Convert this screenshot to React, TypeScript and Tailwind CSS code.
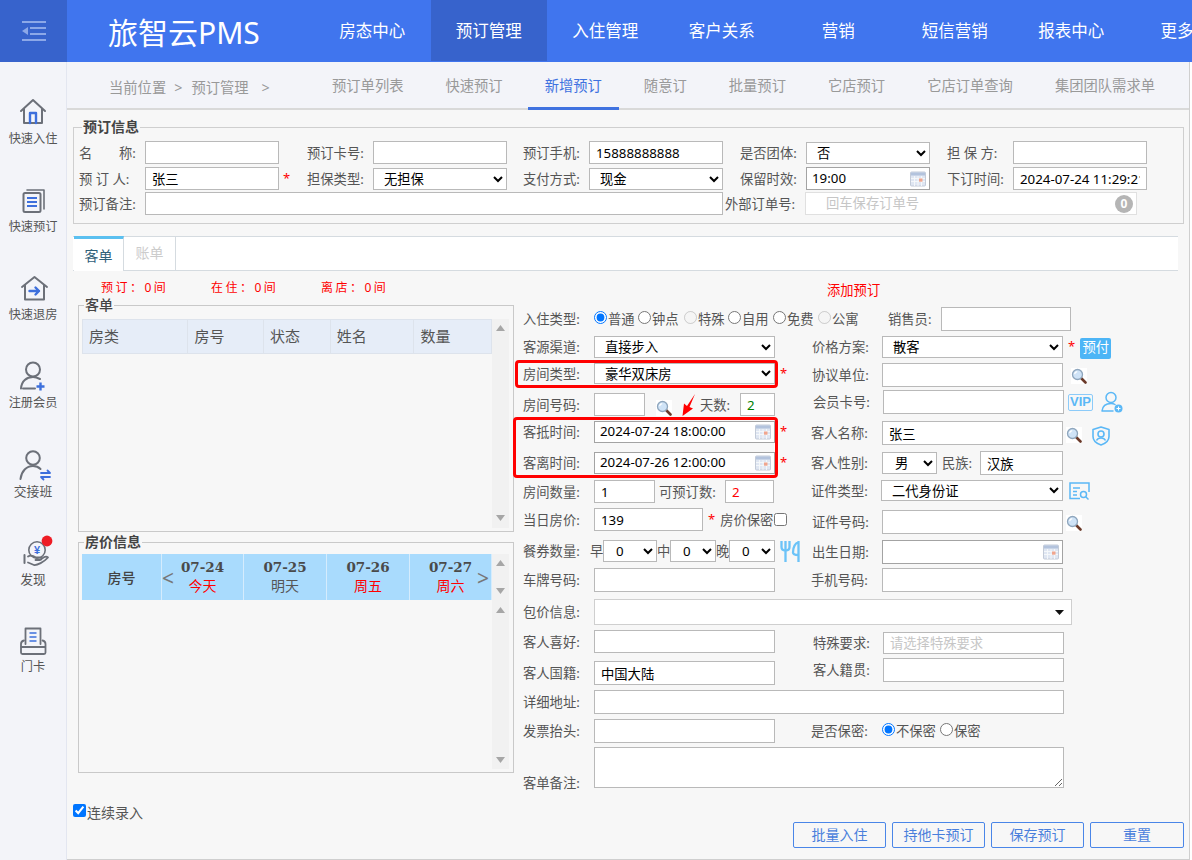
import React from "react";

const navItems = ["房态中心", "预订管理", "入住管理", "客户关系", "营销", "短信营销", "报表中心"];
const subTabs = ["预订单列表", "快速预订", "新增预订", "随意订", "批量预订", "它店预订", "它店订单查询", "集团团队需求单"];

function SearchIcon({ className = "" }: { className?: string }) {
  return (
    <svg className={`h-[16px] w-[16px] shrink-0 ${className}`} viewBox="0 0 16 16">
      <rect width="16" height="16" fill="#fff" />
      <path d="M10 10L14.500 14.500" stroke="#6b3a2a" strokeWidth="2.600" strokeLinecap="round" />
      <circle cx="6.500" cy="6.500" r="5" fill="#cfe3f7" stroke="#8fa6bd" strokeWidth="1.300" />
      <path d="M3.600 6.200a3 3 0 0 1 2.600-2.600" stroke="#fff" strokeWidth="1.200" fill="none" />
    </svg>
  );
}

function CalendarIcon() {
  return (
    <svg className="h-[16px] w-[16px] shrink-0" viewBox="0 0 16 16">
      <rect x="0.500" y="1" width="15" height="14" rx="1" fill="#dfe6f2" stroke="#c3cbd8" />
      <rect x="1" y="1.500" width="14" height="3" fill="#b3c3dd" />
      <path d="M1 7.500H15M1 10.500H15M4.500 5V15M8 5V15M11.500 5V15" stroke="#f6f8fb" strokeWidth="0.900" />
      <rect x="9" y="7.500" width="3.500" height="3.200" fill="#f0a58e" />
    </svg>
  );
}

function Caret() {
  return (
    <svg className="h-[6px] w-[9px]" viewBox="0 0 9 6">
      <path d="M0 0H9L4.500 6Z" fill="#a6a6a6" />
    </svg>
  );
}

function Scrollbar({ className = "" }: { className?: string }) {
  return (
    <div className={`flex w-[17px] flex-col items-center justify-between bg-[#f1f1f1] ${className}`}>
      <span className="rotate-180">
        <Caret />
      </span>
      <Caret />
    </div>
  );
}

function Label({ text, className = "w-[71px]" }: { text: string; className?: string }) {
  return <span className={`shrink-0 whitespace-nowrap text-[13.3px] leading-[18px] text-[#555] ${className}`}>{text}</span>;
}

function Field({ value = "", className = "", placeholder }: { value?: string; className?: string; placeholder?: string }) {
  return (
    <input
      readOnly
      value={value}
      placeholder={placeholder}
      className={`shrink-0 border border-[#b9b9b9] bg-white px-[6px] text-[13.3px] text-black outline-none placeholder:text-[#c6c6c6] ${className}`}
    />
  );
}

function DateField({ value = "", className = "" }: { value?: string; className?: string }) {
  return (
    <div className={`flex shrink-0 items-center justify-between border border-[#a3a3a3] bg-white pl-[5px] pr-[3px] text-[13.3px] text-black ${className}`}>
      <span className="whitespace-nowrap">{value}</span>
      <CalendarIcon />
    </div>
  );
}

function Select({ value, className = "" }: { value: string; className?: string }) {
  return (
    <select className={`shrink-0 border border-[#b9b9b9] bg-white pl-[6px] text-[13.3px] text-black outline-none ${className}`} defaultValue={value}>
      <option>{value}</option>
    </select>
  );
}

function Star({ className = "" }: { className?: string }) {
  return <span className={`shrink-0 -translate-y-px text-[13px] leading-[18px] text-[#f00] ${className}`}>*</span>;
}

function RadioItem({ text, checked, disabled, className }: { text: string; checked?: boolean; disabled?: boolean; className: string }) {
  return (
    <label className={`flex shrink-0 items-center text-[13.3px] leading-[18px] text-[#555] ${className}`}>
      <input type="radio" readOnly checked={!!checked} disabled={disabled} className="m-0 mb-[4px] mr-[1px] h-[13px] w-[13px]" />
      <span className="whitespace-nowrap">{text}</span>
    </label>
  );
}

const grey = "#6c7079";
const blue = "#3d6fdc";

function SideItem({ label, labelClass = "text-[12.2px]", children }: { label: string; labelClass?: string; children: React.ReactNode }) {
  return (
    <div className="flex h-[88px] flex-col items-center">
      <svg className="h-[34px] w-[40px] overflow-visible" viewBox="0 0 40 34" fill="none" strokeLinecap="round" strokeLinejoin="round">
        {children}
      </svg>
      <span className={`whitespace-nowrap leading-[18px] text-[#555] ${labelClass}`}>{label}</span>
    </div>
  );
}

function Sidebar() {
  return (
    <aside className="w-[67px] shrink-0 border-r border-[#e3e6f0] bg-[#f3f4f9] pt-[34px]">
      <SideItem label="快速入住">
        <path d="M8 15L20 4L32 15" stroke={grey} strokeWidth="2" />
        <path d="M11 13V27H29V13" stroke={grey} strokeWidth="2" />
        <path d="M17 27V17H23V27" stroke={blue} strokeWidth="2.400" />
      </SideItem>
      <SideItem label="快速预订">
        <path d="M14 6H31V25" stroke={grey} strokeWidth="1.600" />
        <rect x="10.500" y="9" width="17" height="19" rx="1.500" stroke={grey} strokeWidth="2" />
        <path d="M14 14H24M14 18H24M14 22H24" stroke={blue} strokeWidth="2" strokeLinecap="butt" />
      </SideItem>
      <SideItem label="快速退房">
        <path d="M9 15L21.500 5L34 15" stroke={grey} strokeWidth="2" />
        <path d="M12 13V27.500H31V13" stroke={grey} strokeWidth="2" />
        <path d="M16.500 19H26M22.500 15.500L26 19L22.500 22.500" stroke={blue} strokeWidth="2.400" />
      </SideItem>
      <SideItem label="注册会员">
        <circle cx="20" cy="9.500" r="7" stroke={grey} strokeWidth="2" />
        <path d="M8 28.500C8.500 21 13.500 17 20 17C23 17 25 18 27 19" stroke={grey} strokeWidth="2" />
        <path d="M10 28.500H22" stroke={grey} strokeWidth="2" />
        <path d="M27.500 22.500V30.500M23.500 26.500H31.500" stroke={blue} strokeWidth="2.400" strokeLinecap="butt" />
      </SideItem>
      <SideItem label="交接班" labelClass="text-[12.8px]">
        <circle cx="20" cy="10" r="6.800" stroke={grey} strokeWidth="2" />
        <path d="M7.500 31C8.500 23 13.500 18 20 18C23 18 25.500 19 27.500 21" stroke={grey} strokeWidth="2" />
        <path d="M28 25H37L34.500 22.500M37 29H28L30.500 31.500" stroke={blue} strokeWidth="1.800" />
      </SideItem>
      <SideItem label="发现" labelClass="text-[12.8px]">
        <circle cx="24" cy="14" r="8.200" stroke={grey} strokeWidth="1.600" />
        <text x="24" y="18" textAnchor="middle" fontSize="11" fontWeight="700" fill={blue} fontFamily="Liberation Sans">¥</text>
        <path d="M11.500 19V27" stroke={grey} strokeWidth="2" />
        <path d="M15 20.500C18 18.500 20 19.500 23 21.500H27C29 21.500 29 24 27 24H22.500M15 26.500L21 29C24 29.500 31 26 35 21.500C33.500 20 31.500 20.500 29 22.500" stroke={grey} strokeWidth="1.800" />
        <circle cx="34" cy="5" r="5.400" fill="#ee1c25" />
      </SideItem>
      <SideItem label="门卡">
        <path d="M12.500 20V4.500H27.500V20" stroke={grey} strokeWidth="1.800" />
        <path d="M16.500 9H23.500M16.500 13H23.500M16.500 17H23.500" stroke={blue} strokeWidth="1.600" strokeLinecap="butt" />
        <path d="M11 16.500C8.500 17 8 18.500 8 20V28.500C8 29.500 8.500 30 9.500 30H31C32 30 32.500 29.500 32.500 28.500V20C32.500 18.500 32 17 29.500 16.500" stroke={grey} strokeWidth="1.800" />
        <path d="M8.500 23H32" stroke={grey} strokeWidth="1.800" />
      </SideItem>
    </aside>
  );
}

function Header() {
  return (
    <header className="flex h-[62px] overflow-hidden bg-[#4075ee] text-white">
      <div className="flex w-[67px] shrink-0 items-center justify-center bg-[#3763cc]">
        <svg className="h-[20px] w-[24px]" viewBox="0 0 24 20" fill="#8ca8e8">
          <rect y="0" width="24" height="2" />
          <rect x="8" y="6" width="16" height="2" />
          <rect x="8" y="12" width="16" height="2" />
          <rect y="18" width="24" height="2" />
          <path d="M0 10L6 6V14Z" />
        </svg>
      </div>
      <div className="w-[247px] shrink-0 pl-[41px] text-[30px] leading-[66px] whitespace-nowrap">旅智云PMS</div>
      {navItems.map((item) => (
        <div
          key={item}
          className={`w-[116.5px] shrink-0 whitespace-nowrap text-center text-[16.5px] leading-[62px] ${item === "预订管理" ? "mb-px bg-[#3763cc]" : ""}`}
        >
          {item}
        </div>
      ))}
      <div className="shrink-0 whitespace-nowrap pl-[31px] text-[16.5px] leading-[62px]">更多</div>
    </header>
  );
}

function SubNav() {
  return (
    <div className="flex h-[48px] items-end border-b-2 border-[#d9d9d9] bg-[#f3f4f9] pl-[42px] text-[14.3px] text-[#999]">
      <div className="mb-[10px] flex w-[223px] shrink-0 leading-[21px]">
        <span>当前位置</span>
        <span className="ml-[8px]">{">"}</span>
        <span className="ml-[9px]">预订管理</span>
        <span className="ml-[13px]">{">"}</span>
      </div>
      <div className="flex gap-[42px]">
        {subTabs.map((tab) => (
          <div
            key={tab}
            className={`whitespace-nowrap pb-[11px] leading-[21px] ${tab === "新增预订" ? "-mx-[17px] -mb-[2px] border-b-[3px] border-[#3f72e0] px-[17px] text-[#3f72e0]" : ""}`}
          >
            {tab}
          </div>
        ))}
      </div>
    </div>
  );
}

const topGrid = "grid h-[23px] grid-cols-[66px_134px_28px_66px_134px_16px_66px_134px_17px_66px_124px_17px_66px_134px]";

function BookingInfo() {
  return (
    <fieldset className="ml-[6px] mr-[5px] mt-[8px] h-[106px] border border-[#cfcfcf] pl-[5px]">
      <legend className="ml-[3px] px-[1px] text-[14px] font-bold leading-[18px] text-[#444]">预订信息</legend>
      <div className="flex flex-col gap-[2px] pt-[5px]">
        <div className={`${topGrid} items-center`}>
          <Label className="" text="名　　称:" />
          <Field className="h-[23px] w-[134px]" />
          <span />
          <Label className="" text="预订卡号:" />
          <Field className="h-[23px] w-[134px]" />
          <span />
          <Label className="" text="预订手机:" />
          <Field className="h-[23px] w-[134px]" value="15888888888" />
          <span />
          <Label className="" text="是否团体:" />
          <Select className="h-[22px] w-[124px]" value="否" />
          <span />
          <Label className="" text="担 保 方:" />
          <Field className="h-[23px] w-[134px]" />
        </div>
        <div className={`${topGrid} mt-px items-center`}>
          <Label className="" text="预 订 人:" />
          <Field className="h-[23px] w-[134px]" value="张三" />
          <Star className="pl-[4px]" />
          <Label className="" text="担保类型:" />
          <Select className="h-[22px] w-[134px]" value="无担保" />
          <span />
          <Label className="" text="支付方式:" />
          <Select className="h-[22px] w-[134px]" value="现金" />
          <span />
          <Label className="" text="保留时效:" />
          <DateField className="h-[23px] w-[124px]" value="19:00" />
          <span />
          <Label className="" text="下订时间:" />
          <input readOnly value="2024-07-24 11:29:21" className="h-[23px] w-[134px] border border-[#b9b9b9] bg-white px-[6px] text-[13.3px] text-black outline-none" />
        </div>
        <div className="flex h-[23px] items-center">
          <Label className="w-[66px]" text="预订备注:" />
          <Field className="h-[23px] w-[578px]" />
          <Label className="ml-[2px] w-[80px]" text="外部订单号:" />
          <div className="flex h-[23px] w-[332px] items-center justify-between border border-[#e0e0e0] bg-white pl-[20px] pr-[3px] text-[13.3px] text-[#c6c6c6]">
            <span>回车保存订单号</span>
            <span className="flex h-[18px] w-[18px] items-center justify-center rounded-full bg-[#b5b5b5] text-[12px] font-bold text-white">0</span>
          </div>
        </div>
      </div>
    </fieldset>
  );
}

function GuestList() {
  const cols = [
    { name: "房类", w: "w-[106px]" },
    { name: "房号", w: "w-[76px]" },
    { name: "状态", w: "w-[67px]" },
    { name: "姓名", w: "w-[84px]" },
    { name: "数量", w: "w-[77px]" },
  ];
  return (
    <fieldset className="h-[236px] w-[436px] border border-[#c9c9c9] pl-[3px]">
      <legend className="ml-[2px] px-px text-[14px] font-medium leading-[18px] text-[#444]">客单</legend>
      <div className="flex pt-[5px]">
        <div className="flex h-[35px] w-[410px] shrink-0 border border-[#dde3ec] bg-[#e6edf8] text-[15px] leading-[33px] text-[#555]">
          {cols.map((c) => (
            <div key={c.name} className={`${c.w} border-r border-[#dde3ec] pl-[6px] last:border-r-0`}>
              {c.name}
            </div>
          ))}
        </div>
        <Scrollbar className="h-[209px] pb-[7px] pt-[6px]" />
      </div>
    </fieldset>
  );
}

function PriceInfo() {
  const days = [
    { date: "07-24", day: "今天", red: true, w: "w-[82px]" },
    { date: "07-25", day: "明天", red: false, w: "w-[83px]" },
    { date: "07-26", day: "周五", red: true, w: "w-[83px]" },
    { date: "07-27", day: "周六", red: true, w: "w-[82px]" },
  ];
  return (
    <fieldset className="mt-px h-[240px] w-[436px] border border-[#c9c9c9] pl-[3px]">
      <legend className="ml-[2px] px-px text-[14px] font-bold leading-[18px] text-[#444]">房价信息</legend>
      <div className="flex pt-[3px]">
        <div className="relative flex h-[46px] w-[410px] shrink-0 bg-[#a9dbfd]">
          <div className="w-[80px] border-r border-[#d5ecfd] text-center text-[14px] font-medium leading-[48px] text-[#444]">房号</div>
          {days.map((d) => (
            <div key={d.date} className={`${d.w} border-r border-[#d5ecfd] text-center last:border-r-0`}>
              <div className="pt-[5px] font-['DejaVu_Serif',serif] text-[13.5px] font-bold leading-[17px] text-[#4a4a4a]">{d.date}</div>
              <div className={`text-[14px] leading-[20px] ${d.red ? "text-[#f00]" : "text-[#555]"}`}>{d.day}</div>
            </div>
          ))}
          <span className="absolute left-[80px] top-[12px] text-[21px] leading-[24px] text-[#777]">{"<"}</span>
          <span className="absolute right-[3px] top-[12px] text-[21px] leading-[24px] text-[#777]">{">"}</span>
        </div>
        <div className="flex w-[17px] flex-col">
          <Scrollbar className="h-[46px] py-[6px]" />
          <Scrollbar className="h-[169px] pb-[6px] pt-[7px]" />
        </div>
      </div>
    </fieldset>
  );
}

function PersonAddIcon() {
  return (
    <svg className="ml-[8px] h-[22px] w-[22px] shrink-0" viewBox="0 0 22 22" fill="none" stroke="#5bb8f6" strokeWidth="1.500">
      <circle cx="10" cy="6.500" r="5" />
      <path d="M1 20C1.500 15 5 12.500 10 12.500C11.500 12.500 13 12.800 14 13.500M1 20H12" strokeLinecap="round" />
      <circle cx="17.500" cy="17.500" r="4" fill="#5bb8f6" stroke="none" />
      <path d="M15.500 17.500H19.500M17.500 15.500V19.500" stroke="#fff" strokeWidth="1.100" />
    </svg>
  );
}

function ShieldIcon() {
  return (
    <svg className="ml-[10px] mt-[5px] h-[20px] w-[18px] shrink-0" viewBox="0 0 18 20" fill="none" stroke="#5bb8f6" strokeWidth="1.600">
      <path d="M9 1L17 3.500V10.500C17 14.500 13.500 17.500 9 19C4.500 17.500 1 14.500 1 10.500V3.500Z" strokeLinejoin="round" />
      <circle cx="9" cy="8" r="3" />
      <path d="M4.500 14.500C5.500 12.500 7 12 9 12C11 12 12.500 12.500 13.500 14.500" />
    </svg>
  );
}

function IdSearchIcon() {
  return (
    <svg className="ml-[6px] h-[18px] w-[21px] shrink-0" viewBox="0 0 21 18" fill="none" stroke="#5bb8f6" strokeWidth="1.500">
      <path d="M11 16.500H1V1H20V10" />
      <path d="M4 6H11M4 9.500H8M4 13H8" />
      <circle cx="14.500" cy="12.500" r="3" />
      <path d="M17 15L19.500 17.500" />
    </svg>
  );
}

function ForkIcon() {
  return (
    <svg className="ml-[5px] h-[23px] w-[20px] shrink-0" viewBox="0 0 20 23" fill="none" stroke="#6cc3f8" strokeWidth="2.300">
      <path d="M1.500 1V7C1.500 9.500 3 10.500 5.500 10.500C8 10.500 9.500 9.500 9.500 7V1M5.500 1V22" />
      <path d="M18.500 1V22M18.500 2C15 3.500 13 7 13 12.500C13 14 14 15 18.500 15" />
    </svg>
  );
}

function GuestForm() {
  return (
    <div className="relative w-[661px]">
      <div className="pl-[304px] pt-[10px] text-[13.3px] leading-[18px] text-[#f00]">添加预订</div>

      <div className="mt-[8px] flex h-[24px] items-center">
        <Label text="入住类型:" />
        <RadioItem className="w-[44px]" text="普通" checked />
        <RadioItem className="w-[46px]" text="钟点" />
        <RadioItem className="w-[44px]" text="特殊" disabled />
        <RadioItem className="w-[45px]" text="自用" />
        <RadioItem className="w-[45px]" text="免费" />
        <RadioItem className="w-[70px]" text="公寓" disabled />
        <Label className="w-[53px]" text="销售员:" />
        <Field className="h-[24px] w-[130px]" />
      </div>

      <div className="mt-[5px] flex">
        <div className="flex w-[289px] shrink-0 flex-col">
          <div className="flex h-[22px] items-center">
            <Label text="客源渠道:" />
            <Select className="h-[22px] w-[181px]" value="直接步入" />
          </div>
          <div className="mt-[5px] flex h-[21px] items-center">
            <Label text="房间类型:" />
            <Select className="h-[21px] w-[181px]" value="豪华双床房" />
            <Star className="ml-[5px]" />
          </div>
          <div className="mt-[9px] flex h-[23px] items-center">
            <Label text="房间号码:" />
            <Field className="h-[23px] w-[51px]" />
            <SearchIcon className="ml-[11px] translate-y-[3px]" />
            <Label className="ml-[28px] w-[40px]" text="天数:" />
            <Field className="h-[23px] w-[35px] !text-[#008000]" value="2" />
          </div>
          <div className="mt-[5px] flex h-[22px] items-center">
            <Label text="客抵时间:" />
            <DateField className="h-[22px] w-[181px]" value="2024-07-24 18:00:00" />
            <Star className="ml-[5px]" />
          </div>
          <div className="mt-[9px] flex h-[22px] items-center">
            <Label text="客离时间:" />
            <DateField className="h-[22px] w-[181px]" value="2024-07-26 12:00:00" />
            <Star className="ml-[5px]" />
          </div>
          <div className="mt-[6px] flex h-[23px] items-center">
            <Label text="房间数量:" />
            <Field className="h-[23px] w-[61px]" value="1" />
            <Label className="ml-[4px] w-[66px]" text="可预订数:" />
            <Field className="h-[23px] w-[49px] !text-[#f00]" value="2" />
          </div>
          <div className="mt-[5px] flex h-[23px] items-center">
            <Label text="当日房价:" />
            <Field className="h-[23px] w-[109px]" value="139" />
            <Star className="ml-[5px]" />
            <Label className="ml-[5px] w-[54px]" text="房价保密" />
            <input type="checkbox" readOnly className="m-0 h-[13px] w-[13px]" />
          </div>
          <div className="mt-[9px] flex h-[22px] items-center">
            <Label className="w-[67px]" text="餐券数量:" />
            <Label className="w-[13px]" text="早" />
            <Select className="h-[22px] w-[54px] !pl-[8px]" value="0" />
            <Label className="w-[13px]" text="中" />
            <Select className="h-[22px] w-[46px] !pl-[8px]" value="0" />
            <Label className="w-[13px]" text="晚" />
            <Select className="h-[22px] w-[46px] !pl-[8px]" value="0" />
            <ForkIcon />
          </div>
          <div className="mt-[6px] flex h-[24px] items-center">
            <Label text="车牌号码:" />
            <Field className="h-[24px] w-[181px]" />
          </div>
        </div>

        <div className="flex flex-col">
          <div className="flex h-[22px] items-center">
            <Label className="w-[70px]" text="价格方案:" />
            <Select className="h-[22px] w-[181px]" value="散客" />
            <Star className="ml-[5px]" />
            <span className="ml-[5px] mt-[2px] flex h-[21px] w-[31px] items-center justify-center rounded-[2px] bg-[#4db5f6] text-[13.3px] text-white">预付</span>
          </div>
          <div className="mt-[5px] flex h-[24px] items-center">
            <Label className="w-[70px]" text="协议单位:" />
            <Field className="h-[24px] w-[181px]" />
            <SearchIcon className="ml-[8px] translate-y-px" />
          </div>
          <div className="mt-[3px] flex h-[24px] items-center pl-px">
            <Label className="w-[70px]" text="会员卡号:" />
            <Field className="h-[24px] w-[181px]" />
            <span className="ml-[4px] flex h-[17px] w-[25px] items-center justify-center rounded-[2px] border border-[#8ccbf9] font-['Liberation_Sans',sans-serif] text-[13px] font-bold text-[#5bb8f6]">VIP</span>
            <PersonAddIcon />
          </div>
          <div className="mt-[7px] flex h-[24px] items-center">
            <Label className="-ml-px w-[71px]" text="客人名称:" />
            <Field className="h-[24px] w-[181px]" value="张三" />
            <SearchIcon className="ml-[3px] translate-y-[2px]" />
            <ShieldIcon />
          </div>
          <div className="mt-[6px] flex h-[24px] items-center">
            <Label className="-ml-px w-[71px]" text="客人性别:" />
            <Select className="h-[22px] w-[55px] !pl-[8px]" value="男" />
            <Label className="ml-[5px] w-[38px]" text="民族:" />
            <Field className="h-[24px] w-[83px]" value="汉族" />
          </div>
          <div className="mt-[5px] flex h-[21px] items-center">
            <Label className="-ml-px w-[70px]" text="证件类型:" />
            <Select className="h-[21px] w-[182px]" value="二代身份证" />
            <IdSearchIcon />
          </div>
          <div className="mt-[9px] flex h-[24px] items-center">
            <Label className="w-[70px]" text="证件号码:" />
            <Field className="h-[24px] w-[181px]" />
            <SearchIcon className="ml-[3px] translate-y-px" />
          </div>
          <div className="mt-[6px] flex h-[24px] items-center">
            <Label className="w-[70px]" text="出生日期:" />
            <DateField className="h-[24px] w-[181px]" />
          </div>
          <div className="mt-[4px] flex h-[24px] items-center">
            <Label className="-ml-px w-[71px]" text="手机号码:" />
            <Field className="h-[24px] w-[181px]" />
          </div>
        </div>
      </div>

      <div className="mt-[7px] flex h-[26px] items-center">
        <Label text="包价信息:" />
        <div className="flex h-[26px] w-[478px] items-center justify-end border border-[#cfcfcf] bg-white pr-[7px]">
          <svg className="h-[5px] w-[9px]" viewBox="0 0 9 5">
            <path d="M0 0H9L4.500 5Z" fill="#111" />
          </svg>
        </div>
      </div>

      <div className="mt-[5px] flex">
        <div className="flex w-[290px] shrink-0 flex-col">
          <div className="flex h-[23px] items-center">
            <Label text="客人喜好:" />
            <Field className="h-[23px] w-[181px]" />
          </div>
          <div className="mt-[8px] flex h-[24px] items-center">
            <Label text="客人国籍:" />
            <Field className="h-[24px] w-[181px]" value="中国大陆" />
          </div>
        </div>
        <div className="flex flex-col pt-[2px]">
          <div className="flex h-[22px] items-center">
            <Label className="w-[70px]" text="特殊要求:" />
            <Field className="h-[22px] w-[181px]" placeholder="请选择特殊要求" />
          </div>
          <div className="mt-[4px] flex h-[24px] items-center">
            <Label className="w-[70px]" text="客人籍贯:" />
            <Field className="h-[24px] w-[181px]" />
          </div>
        </div>
      </div>

      <div className="mt-[5px] flex h-[24px] items-center">
        <Label text="详细地址:" />
        <Field className="h-[24px] w-[470px]" />
      </div>

      <div className="mt-[5px] flex h-[24px] items-center">
        <Label className="w-[71px]" text="发票抬头:" />
        <Field className="h-[24px] w-[181px]" />
        <Label className="ml-[36px] w-[71px]" text="是否保密:" />
        <RadioItem className="w-[58px]" text="不保密" checked />
        <RadioItem className="w-[44px]" text="保密" />
      </div>

      <div className="mt-[4px] flex items-end">
        <Label className="mb-[-4px] w-[71px]" text="客单备注:" />
        <textarea readOnly className="block h-[41px] w-[470px] border border-[#b9b9b9] bg-white outline-none" />
      </div>

      <div className="mt-[34px] flex gap-[6px] pl-[270px]">
        {["批量入住", "持他卡预订", "保存预订", "重置"].map((b) => (
          <button key={b} className="h-[26px] w-[93px] rounded-[2px] border border-[#4a86e8] text-[14px] leading-[24px] text-[#4a7fdc] last:w-[94px]">
            {b}
          </button>
        ))}
      </div>

      {/* red callouts drawn over the form */}
      <div className="absolute left-[-8px] top-[89px] h-[28px] w-[263px] rounded-[4px] border-[3px] border-[#f00]" />
      <div className="absolute left-[-10px] top-[146px] h-[61px] w-[265px] rounded-[4px] border-[3px] border-[#f00]" />
      <svg className="absolute left-[158px] top-[122px] h-[24px] w-[16px]" viewBox="0 0 16 24">
        <path d="M14 1L8.500 14L12 15.500L1.500 23L3 10.500L6 13Z" fill="#f00" />
      </svg>
    </div>
  );
}

function OrderPanel() {
  return (
    <div className="flex pl-[11px]">
      <div className="w-[436px] shrink-0">
        <div className="flex h-[25px] items-start pl-[23px] pt-[7px] text-[12px] leading-[20px] tracking-[2.5px] text-[#f00]">
          <span className="w-[110px] whitespace-nowrap">预订：0间</span>
          <span className="w-[110px] whitespace-nowrap">在住：0间</span>
          <span className="w-[110px] whitespace-nowrap">离店：0间</span>
        </div>
        <GuestList />
        <PriceInfo />
        <label className="-ml-[5px] mt-[31px] flex items-start text-[14px] leading-[18px] text-[#555]">
          <input type="checkbox" readOnly checked className="m-0 h-[13px] w-[13px]" />
          <span className="ml-px">连续录入</span>
        </label>
      </div>
      <div className="ml-[9px]">
        <GuestForm />
      </div>
    </div>
  );
}

export default function App() {
  return (
    <div className="h-[860px] w-[1192px] overflow-hidden bg-white font-[family-name:'Noto_Sans','Noto_Sans_CJK_SC',sans-serif]">
      <Header />
      <div className="flex h-[798px]">
        <Sidebar />
        <main className="w-[1123px] border-b border-r border-[#cfcfcf] bg-[#f7f7f7]">
          <SubNav />
          <BookingInfo />
          <div className="ml-[6px] mr-[11px] mt-[12px] flex h-[35px] border-b border-t border-[#d5dbe0] bg-white text-[14px]">
            <div className="-my-px ml-px w-[50px] border-r border-t-[3px] border-r-[#d5dbe0] border-t-[#5bc0f0] bg-white text-center leading-[34px] text-[#2f6079]">客单</div>
            <div className="w-[52px] border-r border-[#d5dbe0] text-center leading-[31px] text-[#ccc]">账单</div>
          </div>
          <OrderPanel />
        </main>
      </div>
    </div>
  );
}
